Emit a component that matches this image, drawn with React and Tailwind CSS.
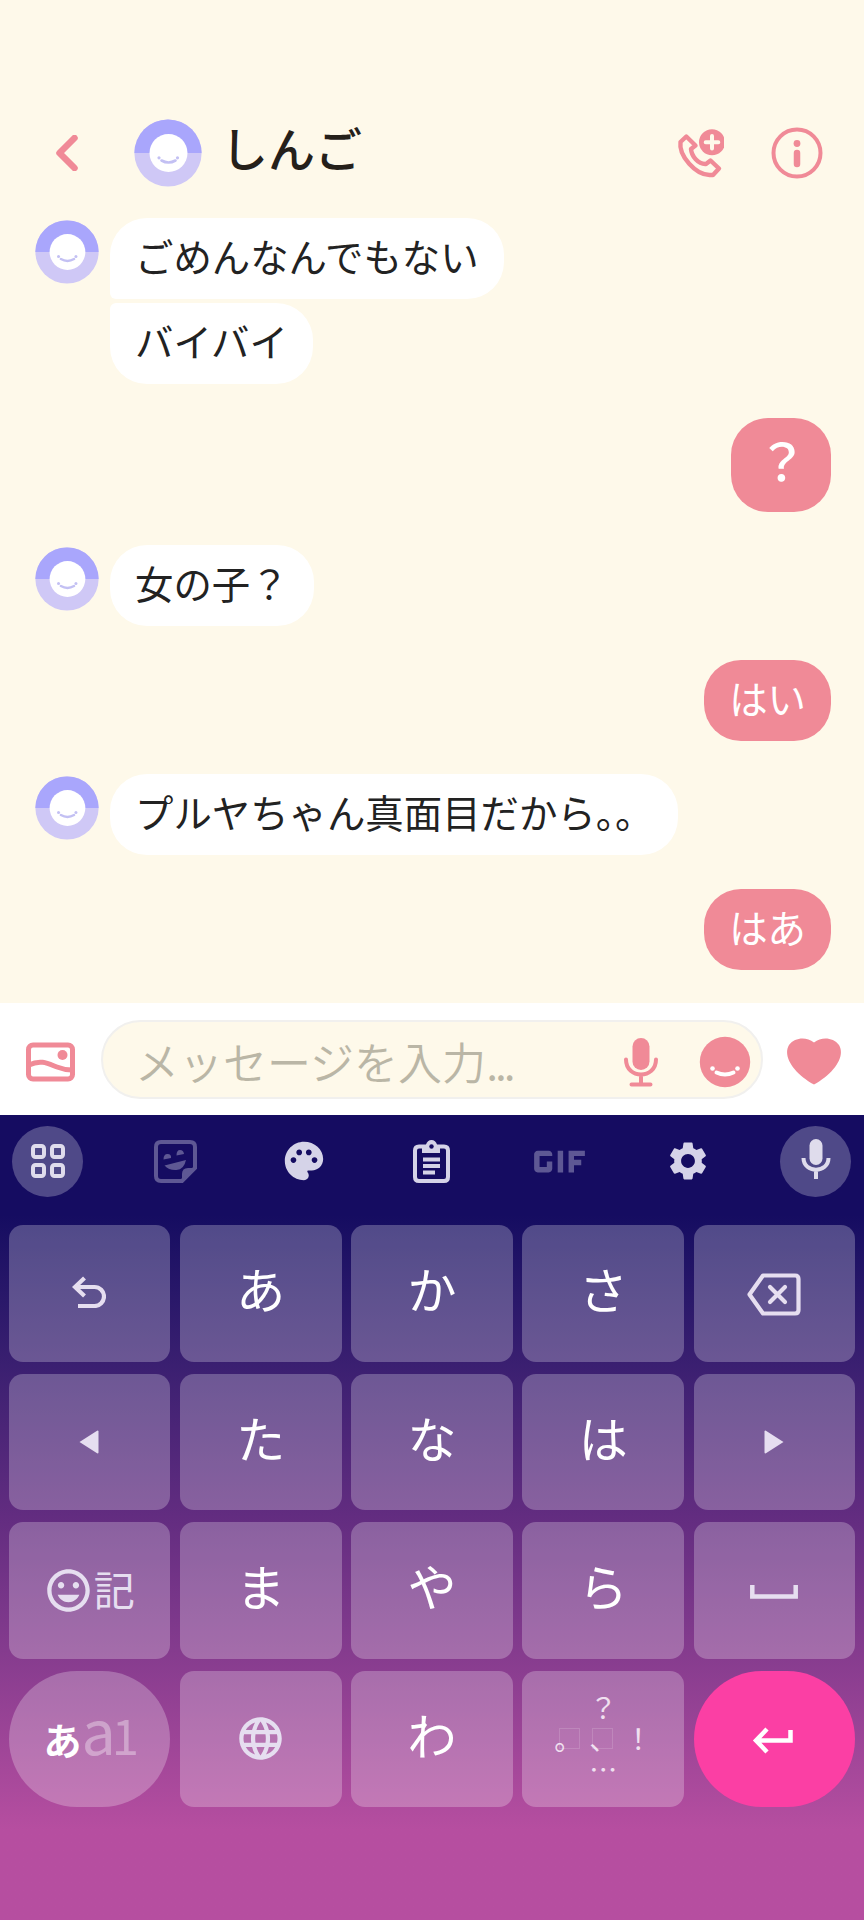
// src/App.jsx

import React from 'react';
import { MdGif, MdLanguage, MdOutlineMood, MdPalette, MdSettings } from 'react-icons/md';

const messages = [
  { id: 1, from: 'them', avatar: true, text: 'ごめんなんでもない', spacing: 'mt-[18px]', corners: 'rounded-[37px] rounded-bl-[6px]' },
  { id: 2, from: 'them', text: 'バイバイ', spacing: 'mt-1', corners: 'rounded-[37px] rounded-tl-[6px]' },
  { id: 3, from: 'me', text: '？', big: true, spacing: 'mt-[34px]', corners: 'rounded-[37px]' },
  { id: 4, from: 'them', avatar: true, text: '女の子？', spacing: 'mt-[33px]', corners: 'rounded-[37px]' },
  { id: 5, from: 'me', text: 'はい', spacing: 'mt-[34px]', corners: 'rounded-[37px]' },
  { id: 6, from: 'them', avatar: true, text: 'プルヤちゃん真面目だから。。', spacing: 'mt-[33px]', corners: 'rounded-[37px]' },
  { id: 7, from: 'me', text: 'はあ', spacing: 'mt-[34px]', corners: 'rounded-[37px]' },
];

const Avatar = ({ className }) => (
  <svg viewBox="0 0 68 68" className={className}>
    <circle cx="34" cy="34" r="33.6" fill="#cfc8f6" />
    <path d="M.4 34a33.6 33.6 0 0 1 67.2 0z" fill="#a9a6fc" />
    <circle cx="34.5" cy="34" r="19" fill="#fff" />
    <circle cx="25" cy="38.8" r="1.6" fill="#c3c0f3" />
    <circle cx="43.5" cy="38.8" r="1.6" fill="#c3c0f3" />
    <path d="M27.5 41.5q7 4 14 0" fill="none" stroke="#c3c0f3" strokeWidth="2.6" strokeLinecap="round" />
  </svg>
);

const Header = () => (
  <header className="flex h-[200px] shrink-0 items-end pr-[41px] pb-[13px] pl-[56px]">
    <svg viewBox="0 0 22 36" className="mb-[16px] h-9 w-[22px]" fill="none" stroke="#f08a97" strokeWidth="6.500" strokeLinecap="round" strokeLinejoin="round">
      <path d="M18.5 3 3.500 18l15 15" />
    </svg>
    <Avatar className="ml-[56px] h-[68px] w-[68px]" />
    <h1 className="mb-[8px] ml-[19px] text-[47px] leading-[64px] font-medium text-[#25201a]">しんご</h1>
    <div className="mb-[8px] ml-auto flex items-center gap-[47px] text-[#f08a97]">
      {/* Add call */}
      <svg viewBox="0 0 48 50" className="h-[50px] w-12">
        <path
          d="M10.300 8.500 4.500 14C2.500 28 20 47 33.500 47H37l6-6.500-8.500-8-4.500 3.500c-8 .5-14.500-8-15-15l4.500-3.500z"
          fill="none" stroke="currentColor" strokeWidth="4.400" strokeLinejoin="round"
        />
        <circle cx="36" cy="14.300" r="13" fill="currentColor" />
        <path d="M36 8v12.600M29.700 14.300h12.600" stroke="#fef9ea" strokeWidth="4" strokeLinecap="round" />
      </svg>
      {/* Info */}
      <svg viewBox="0 0 52 52" className="h-[52px] w-[52px]">
        <circle cx="26" cy="26" r="23.500" fill="none" stroke="currentColor" strokeWidth="4" />
        <circle cx="26" cy="16.500" r="3.400" fill="currentColor" />
        <path d="M26 26v11" stroke="currentColor" strokeWidth="6.500" strokeLinecap="round" />
      </svg>
    </div>
  </header>
);

const Message = ({ message }) => {
  const mine = message.from === 'me';
  const size = message.big
    ? 'h-[94px] pr-[23.5px] pl-[25.5px] pb-[12px] text-[51px] font-medium'
    : 'h-[81px] px-[25px] pb-[6px] text-[38.4px]';
  const color = mine ? 'bg-[#f08a97] text-white' : 'bg-white text-[#222]';

  return (
    <div className={`flex ${message.spacing} ${mine ? 'justify-end pr-[33px]' : 'pl-[35px]'}`}>
      {!mine && (
        <div className="mr-[11px] w-16 shrink-0 pt-0.5">
          {message.avatar && <Avatar className="h-16 w-16" />}
        </div>
      )}
      <div className={`flex items-center whitespace-nowrap ${size} ${color} ${message.corners}`}>
        {message.text}
      </div>
    </div>
  );
};

const Composer = () => (
  <div className="flex h-[112px] shrink-0 items-center bg-white pr-[22px] pl-[26px] text-[#f08a97]">
    <svg viewBox="0 0 49 40" className="mt-[5px] h-10 w-[49px]" fill="none" stroke="currentColor" strokeWidth="5">
      <rect x="2.500" y="3" width="44" height="34" rx="4.500" />
      <path d="M3 23c12-6 20-1 28 2 5 2 9 3 15 3" />
      <circle cx="36.500" cy="13" r="5" fill="currentColor" stroke="none" />
    </svg>
    <div className="ml-[26px] flex h-[79px] w-[662px] items-center rounded-full border-2 border-[#f1f0ee] bg-[#fef9ea] pr-[10px] pl-[32px]">
      <span className="pt-[3px] text-[44px] leading-none font-[350] text-[#bab6a6]">
        メッセージを入力<span className="tracking-[-3px]">...</span>
      </span>
      <svg viewBox="0 0 34 50" className="mt-[5px] ml-auto h-[50px] w-[34px]" fill="none" stroke="currentColor" strokeWidth="4" strokeLinecap="round">
        <rect x="8.500" y="1" width="17" height="32" rx="8.500" fill="currentColor" stroke="none" />
        <path d="M2 22.500c0 20 30 20 30 0M17 38v9M7.500 47.500h19" />
      </svg>
      <svg viewBox="0 0 52 52" className="mt-[5px] ml-[41px] h-[52px] w-[52px]">
        <circle cx="26" cy="26" r="25.200" fill="currentColor" />
        <circle cx="13.500" cy="32.500" r="2.300" fill="#fff" />
        <circle cx="38.500" cy="32.500" r="2.300" fill="#fff" />
        <path d="M17.500 36.500q8.500 4 17 0" fill="none" stroke="#fff" strokeWidth="4" strokeLinecap="round" />
      </svg>
    </div>
    <svg viewBox="0 0 56 47" className="mt-1 ml-auto h-[47px] w-14" fill="currentColor">
      <path d="M28 4.500C36-1.500 47-.5 53 7c7 12-6 29-25 39.500C9 36 -4 19 3 7 9-.5 20-1.500 28 4.500z" />
    </svg>
  </div>
);

const ToolbarItem = ({ round, children }) => (
  <button className={`flex h-[71px] w-[71px] items-center justify-center rounded-full text-[#d5d3e8] ${round ? 'bg-white/25' : ''}`}>
    {children}
  </button>
);

const Toolbar = () => (
  <div className="flex h-[110px] items-start justify-between pt-[10.5px] pr-[13px] pl-3">
    <ToolbarItem round>
      <svg viewBox="0 0 34 34" className="h-[34px] w-[34px]" fill="none" stroke="#dfdcec" strokeWidth="4">
        <rect x="2" y="2" width="11" height="11" rx="2.500" />
        <rect x="21" y="2" width="11" height="11" rx="2.500" />
        <rect x="2" y="21" width="11" height="11" rx="2.500" />
        <rect x="21" y="21" width="11" height="11" rx="2.500" />
      </svg>
    </ToolbarItem>
    <ToolbarItem>
      <svg viewBox="0 0 43 43" className="h-[43px] w-[43px] text-[#5e5894]">
        <path d="M7 2h29q5 0 5 5v21L28 41H7q-5 0-5-5V7q0-5 5-5z" fill="none" stroke="currentColor" strokeWidth="4" />
        <path d="M28 41v-7q0-6 6-6h7z" fill="currentColor" />
        <path d="M9.500 19.500q0-5.500 4-5.500t3.500 4zM22.500 15.500q0-5.500 3.500-5.500t4 4zM10.500 25.500 32 20q-2 9.500-9.500 10t-12-4.500z" fill="currentColor" />
      </svg>
    </ToolbarItem>
    <ToolbarItem>
      <MdPalette size={46} />
    </ToolbarItem>
    <ToolbarItem>
      <svg viewBox="0 0 37 43" className="h-[43px] w-[37px]">
        <path d="M6 6.500h25q4 0 4 4V37q0 4-4 4H6q-4 0-4-4V10.500q0-4 4-4z" fill="none" stroke="currentColor" strokeWidth="4" />
        <path d="M9 5h3.800q1.700-5 5.700-5t5.700 5H27v8H9z" fill="currentColor" />
        <circle cx="18.500" cy="6.500" r="2.200" fill="#160c61" />
        <path d="M10 19.500h17M10 26h17M10 32.500h12" stroke="currentColor" strokeWidth="4" />
      </svg>
    </ToolbarItem>
    <ToolbarItem>
      <MdGif size={87} aria-label="GIF" className="shrink-0 text-[#5e5894]" />
    </ToolbarItem>
    <ToolbarItem>
      <MdSettings size={46} />
    </ToolbarItem>
    <ToolbarItem round>
      <svg viewBox="0 0 30 42" className="mb-1 h-[42px] w-[30px]" fill="none" stroke="#dfdcec" strokeWidth="4">
        <rect x="8.500" y="1" width="13" height="26" rx="6.500" fill="#dfdcec" stroke="none" />
        <path d="M2.500 20c0 15.500 25 15.500 25 0M15 31v10" />
      </svg>
    </ToolbarItem>
  </div>
);

const Key = ({ className = 'rounded-[14px] bg-white/25', children }) => (
  <button className={`flex items-center justify-center text-[#e6def0] ${className}`}>{children}</button>
);

const Kana = ({ children }) => (
  <Key>
    <span className="pb-[11px] text-[49px] leading-none text-white">{children}</span>
  </Key>
);

const PunctuationKey = () => (
  <Key>
    <div className="flex flex-col items-center text-[28px] leading-[31px] text-[#f0e0f0]">
      <span>？</span>
      <div className="flex w-[98px] justify-between">
        <span className="relative w-7">
          。<i className="absolute top-[5px] left-[5px] h-[21px] w-[21px] border border-white/15" />
        </span>
        <span className="relative w-7">
          、<i className="absolute top-[5px] left-[3px] h-[21px] w-[21px] border border-white/15" />
        </span>
        <span className="w-7">！</span>
      </div>
      <span>…</span>
    </div>
  </Key>
);

const Keyboard = () => (
  <div className="flex-1 bg-linear-to-b from-[#150c61] from-[100px] via-[#622c80] via-[400px] to-[#b64ea0] to-[715px]">
    <Toolbar />
    <div className="grid auto-rows-[136.5px] grid-cols-5 gap-x-[9.8px] gap-y-3 px-[9px]">
      <Key>
        <svg viewBox="0 0 34 32" className="mr-0.5 mb-[3px] h-8 w-[34px]" fill="none" stroke="currentColor" strokeWidth="4.200">
          <path d="M12.500 2 3 11l9.500 9M3 11h19.500a9.500 9.500 0 0 1 0 19H6" />
        </svg>
      </Key>
      <Kana>あ</Kana>
      <Kana>か</Kana>
      <Kana>さ</Kana>
      <Key>
        <svg viewBox="0 0 54 43" className="mt-[3px] h-[43px] w-[54px]" fill="none" stroke="currentColor" strokeWidth="4.200" strokeLinejoin="round">
          <path d="M16 2.500h32q3.500 0 3.500 3.500v31q0 3.500-3.500 3.500H16L2.500 21.500z" />
          <path d="m23 14 15 15M38 14 23 29" strokeLinecap="round" />
        </svg>
      </Key>

      <Key>
        <svg viewBox="0 0 20 24" className="mr-0.5 h-6 w-5" fill="currentColor">
          <path d="M.5 12 18.500.5q1 0 1 1v21q0 1-1 1z" />
        </svg>
      </Key>
      <Kana>た</Kana>
      <Kana>な</Kana>
      <Kana>は</Kana>
      <Key>
        <svg viewBox="0 0 20 24" className="h-6 w-5" fill="currentColor">
          <path d="M19.500 12 1.500.5q-1 0-1 1v21q0 1 1 1z" />
        </svg>
      </Key>

      <Key>
        <MdOutlineMood size={51} className="-ml-0.5" />
        <span className="pb-[3px] text-[41px] leading-none">記</span>
      </Key>
      <Kana>ま</Kana>
      <Kana>や</Kana>
      <Kana>ら</Kana>
      <Key>
        <svg viewBox="0 0 48 14" className="mt-[3px] h-[14px] w-12" fill="none" stroke="currentColor" strokeWidth="4.500">
          <path d="M2.300 0v11.500h43.400V0" />
        </svg>
      </Key>

      <Key className="rounded-full bg-white/25">
        <span className="ml-[3px] flex items-baseline pb-[20px] leading-none">
          <span className="text-[38px] font-bold text-white">あ</span>
          <span className="text-[61px] text-white/35">a</span>
          <span className="-ml-1 text-[49px] text-white/35">1</span>
        </span>
      </Key>
      <Key>
        <MdLanguage size={51} />
      </Key>
      <Kana>わ</Kana>
      <PunctuationKey />
      <Key className="rounded-full bg-[#fb3fa4]">
        <svg viewBox="0 0 42 28" className="mt-[5px] mr-0.5 h-7 w-[42px]" fill="none" stroke="#fff" strokeWidth="4.500">
          <path d="M15 2 4 13.500 15 25M4 13.500h34.500V3" />
        </svg>
      </Key>
    </div>
  </div>
);

export default function App() {
  return (
    <div className="flex h-[1920px] w-[864px] flex-col overflow-hidden bg-[#fef9ea] font-['Noto_Sans_CJK_JP',sans-serif]">
      <Header />
      <main className="flex h-[803px] shrink-0 flex-col">
        {messages.map((message) => (
          <Message key={message.id} message={message} />
        ))}
      </main>
      <Composer />
      <Keyboard />
    </div>
  );
}
